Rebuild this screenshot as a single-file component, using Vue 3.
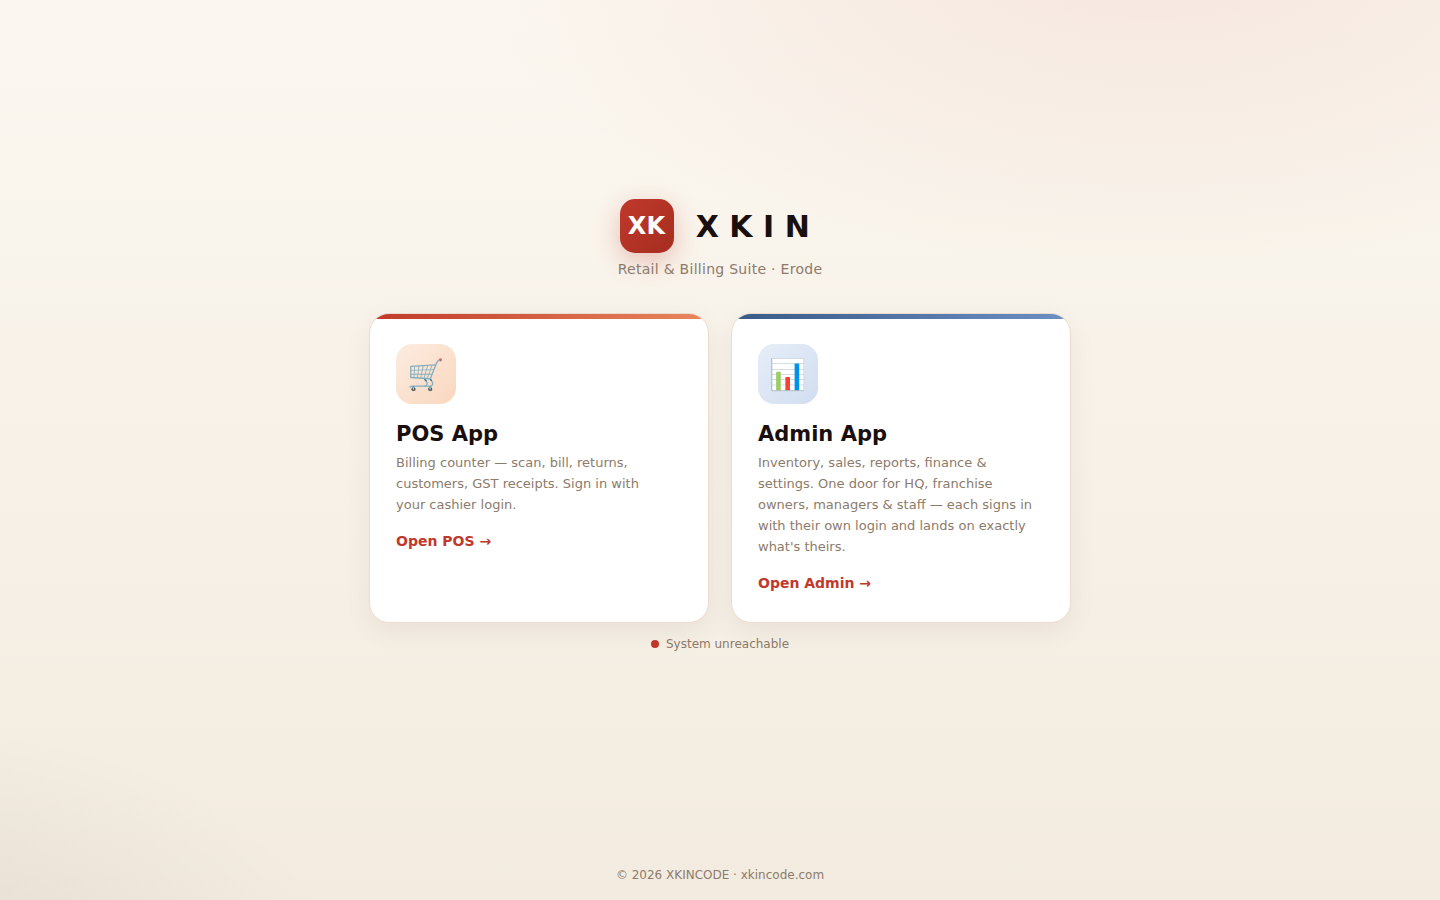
<script setup>
const apps = [
  {
    key: 'pos',
    icon: '🛒',
    title: 'POS App',
    text: 'Billing counter — scan, bill, returns, customers, GST receipts. Sign in with your cashier login.',
    action: 'Open POS →',
  },
  {
    key: 'admin',
    icon: '📊',
    title: 'Admin App',
    text: "Inventory, sales, reports, finance & settings. One door for HQ, franchise owners, managers & staff — each signs in with their own login and lands on exactly what's theirs.",
    action: 'Open Admin →',
  },
]
</script>

<template>
  <div class="page">
    <main class="main">
      <header class="brand">
        <div class="badge" aria-hidden="true">XK</div>
        <h1 class="name">XKIN</h1>
      </header>
      <p class="tagline">Retail &amp; Billing Suite · Erode</p>
      <div class="cards">
        <a v-for="app in apps" :key="app.key" href="#" class="card" :class="app.key">
          <span class="icon" aria-hidden="true">{{ app.icon }}</span>
          <h2 class="title">{{ app.title }}</h2>
          <p class="text">{{ app.text }}</p>
          <span class="action">{{ app.action }}</span>
        </a>
      </div>
      <div class="status" role="status"><span class="dot"></span>System unreachable</div>
    </main>
    <footer class="footer">© 2026 XKINCODE · xkincode.com</footer>
  </div>
</template>

<style>
body {
  margin: 0;
}
</style>

<style scoped>
.page {
  box-sizing: border-box;
  min-height: 100vh;
  display: flex;
  flex-direction: column;
  font-family: "DejaVu Sans", "Noto Color Emoji", sans-serif;
  color: #1a0f0f;
  background:
    radial-gradient(1200px 600px at 80% -10%, rgba(192, 57, 43, 0.1), transparent 60%),
    radial-gradient(900px 500px at -10% 110%, rgba(26, 15, 15, 0.08), transparent 55%),
    linear-gradient(180deg, #fbf7f0 0%, #f3ebdf 100%);
}
.main {
  flex: 1;
  display: flex;
  flex-direction: column;
  align-items: center;
  justify-content: center;
  padding: 0 24px;
}
.brand {
  display: flex;
  align-items: center;
  gap: 22px;
}
.badge {
  width: 54px;
  height: 54px;
  display: flex;
  align-items: center;
  justify-content: center;
  border-radius: 15px;
  background: linear-gradient(135deg, #c0392b, #a52d20);
  box-shadow: 0 8px 24px rgba(192, 57, 43, 0.28);
  color: #fff;
  font-size: 24px;
  font-weight: 700;
  letter-spacing: 0.02em;
}
.name {
  margin: 0;
  font-size: 30px;
  font-weight: 700;
  letter-spacing: 0.35em;
}
.tagline {
  margin: 8px 0 36px;
  font-size: 14px;
  line-height: 16px;
  letter-spacing: 0.02em;
  color: #8c7b6b;
}
.cards {
  width: 100%;
  max-width: 702px;
  display: grid;
  grid-template-columns: repeat(auto-fit, minmax(260px, 1fr));
  gap: 22px;
}
.card {
  position: relative;
  overflow: hidden;
  padding: 30px 26px;
  border: 1px solid #ecdccb;
  border-radius: 20px;
  background: #fff;
  box-shadow: 0 8px 28px rgba(26, 15, 15, 0.06);
  color: inherit;
  text-decoration: none;
}
.card::before {
  content: "";
  position: absolute;
  top: 0;
  left: 0;
  right: 0;
  height: 5px;
}
.pos::before {
  background: linear-gradient(90deg, #c0392b, #e8875c);
}
.admin::before {
  background: linear-gradient(90deg, #3a5a86, #6c8fc4);
}
.icon {
  width: 60px;
  height: 60px;
  display: flex;
  align-items: center;
  justify-content: center;
  border-radius: 16px;
  font-size: 30px;
}
.pos .icon {
  background: linear-gradient(135deg, #fdece0, #f9d7bf);
}
.admin .icon {
  background: linear-gradient(135deg, #e6edf8, #d1def0);
}
.title {
  margin: 18px 0 6px;
  font-size: 21px;
  line-height: 24px;
  font-weight: 700;
}
.text {
  max-width: 275px;
  margin: 0;
  font-size: 13px;
  line-height: 21px;
  color: #8c7b6b;
}
.action {
  display: block;
  margin-top: 18px;
  font-size: 14px;
  line-height: 17px;
  font-weight: 700;
  color: #c0392b;
}
.status {
  margin-top: 14px;
  display: flex;
  align-items: center;
  gap: 7px;
  font-size: 12px;
  line-height: 14px;
  color: #8c7b6b;
}
.dot {
  width: 8px;
  height: 8px;
  border-radius: 50%;
  background: #c0392b;
}
.footer {
  padding: 18px;
  text-align: center;
  font-size: 12px;
  line-height: 14px;
  color: #8c7b6b;
}
</style>
